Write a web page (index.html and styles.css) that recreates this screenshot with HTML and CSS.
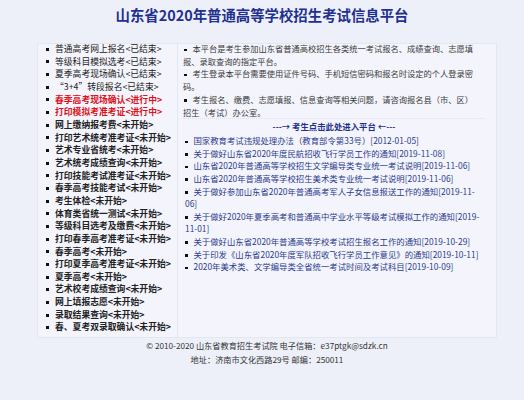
FILE: index.html
```html
<!DOCTYPE html>
<html lang="zh">
<head>
<meta charset="utf-8">
<title>山东省2020年普通高等学校招生考试信息平台</title>
<link rel="stylesheet" href="styles.css">
</head>
<body>
<h1 class="title">山东省2020年普通高等学校招生考试信息平台</h1>
<div class="main">
  <ul class="menu">
    <li>普通高考网上报名&lt;已结束&gt;</li>
    <li>等级科目模拟选考&lt;已结束&gt;</li>
    <li>夏季高考现场确认&lt;已结束&gt;</li>
    <li>“3+4”转段报名&lt;已结束&gt;</li>
    <li class="on">春季高考现场确认&lt;进行中&gt;</li>
    <li class="on">打印模拟考准考证&lt;进行中&gt;</li>
    <li class="b">网上缴纳报考费&lt;未开始&gt;</li>
    <li class="b">打印艺术统考准考证&lt;未开始&gt;</li>
    <li class="b">艺术专业省统考&lt;未开始&gt;</li>
    <li class="b">艺术统考成绩查询&lt;未开始&gt;</li>
    <li class="b">打印技能考试准考证&lt;未开始&gt;</li>
    <li class="b">春季高考技能考试&lt;未开始&gt;</li>
    <li class="b">考生体检&lt;未开始&gt;</li>
    <li class="b">体育类省统一测试&lt;未开始&gt;</li>
    <li class="b">等级科目选考及缴费&lt;未开始&gt;</li>
    <li class="b">打印春季高考准考证&lt;未开始&gt;</li>
    <li class="b">春季高考&lt;未开始&gt;</li>
    <li class="b">打印夏季高考准考证&lt;未开始&gt;</li>
    <li class="b">夏季高考&lt;未开始&gt;</li>
    <li class="b">艺术校考成绩查询&lt;未开始&gt;</li>
    <li class="b">网上填报志愿&lt;未开始&gt;</li>
    <li class="b">录取结果查询&lt;未开始&gt;</li>
    <li class="b">春、夏考双录取确认&lt;未开始&gt;</li>
  </ul>
  <div class="content">
    <div class="notes">
      <p><span class="dot"></span>本平台是考生参加山东省普通高校招生各类统一考试报名、成绩查询、志愿填报、录取查询的指定平台。</p>
      <p><span class="dot"></span>考生登录本平台需要使用证件号码、手机短信密码和报名时设定的个人登录密码。</p>
      <p><span class="dot"></span>考生报名、缴费、志愿填报、信息查询等相关问题，请咨询报名县（市、区）<span class="nw">招生（考试）办公室。</span></p>
    </div>
    <div class="enter">---→ 考生点击此处进入平台 ←---</div>
    <ul class="news">
      <li>国家教育考试违规处理办法（教育部令第33号）[2012-01-05]</li>
      <li>关于做好山东省2020年度民航招收飞行学员工作的通知[2019-11-08]</li>
      <li>山东省2020年普通高等学校招生文学编导类专业统一考试说明[2019-11-06]</li>
      <li>山东省2020年普通高等学校招生美术类专业统一考试说明[2019-11-06]</li>
      <li>关于做好参加山东省2020年普通高考军人子女信息报送工作的通知[2019-11-06]</li>
      <li>关于做好2020年夏季高考和普通高中学业水平等级考试模拟工作的通知[2019-11-01]</li>
      <li>关于做好山东省2020年普通高等学校考试招生报名工作的通知[2019-10-29]</li>
      <li>关于印发《山东省2020年度军队招收飞行学员工作意见》的通知[2019-10-11]</li>
      <li>2020年美术类、文学编导类全省统一考试时间及考试科目[2019-10-09]</li>
    </ul>
  </div>
</div>
<div class="footer">
  <p>© 2010-2020 山东省教育招生考试院 电子信箱：e37ptgk@sdzk.cn</p>
  <p>地址：济南市文化西路29号 邮编：250011</p>
</div>
</body>
</html>
```
FILE: styles.css
```css
html, body {
  margin: 0;
  padding: 0;
  background: #eef0f9;
  font-family: "Noto Sans CJK SC", "Noto Sans", sans-serif;
  color: #333;
}
.title {
  margin: 0;
  padding-top: 5px;
  height: 28px;
  line-height: 20px;
  text-align: center;
  font-size: 14.4px;
  font-weight: bold;
  color: #22318f;
}
.main {
  box-sizing: border-box;
  margin: 10px 27px 0 37px;
  display: flex;
  height: 295px;
  overflow: hidden;
  background: #f4f5fc;
  border: 1px solid #e4e6f0;
}
.menu {
  list-style: none;
  margin: -1px 0 0;
  padding: 0 0 0 8px;
  width: 131px;
  flex: none;
  border-right: 1px solid #e4e6f0;
  font-size: 8.8px;
  line-height: 12.65px;
  color: #222;
}
.menu li {
  display: flex;
  align-items: center;
  white-space: nowrap;
}
.menu li::before {
  content: "";
  width: 3px;
  height: 3px;
  background: #111;
  margin-right: 6px;
  flex: none;
}
.menu li.on {
  color: #d9121b;
  font-weight: bold;
}
.menu li.b {
  font-weight: bold;
}
.content {
  flex: 1;
  padding: 0 11px 0 5px;
  font-size: 8.4px;
}
.notes {
  margin-top: -2px;
  font-size: 8.25px;
  line-height: 12.7px;
  color: #3a3a3a;
  padding-bottom: 0;
  border-bottom: 1px dotted #dde0ec;
}
.notes p {
  margin: 0;
}
.nw {
  white-space: nowrap;
}
.dot {
  display: inline-block;
  width: 2.5px;
  height: 2.5px;
  background: #111;
  vertical-align: middle;
  margin: 0 6px 0 1px;
}
.enter {
  text-align: center;
  font-weight: bold;
  color: #1f2f8a;
  line-height: 14px;
  margin: 0 0 1px;
}
.news {
  list-style: none;
  margin: 0;
  padding: 0 0 0 2px;
  line-height: 12.6px;
  color: #2b3a8c;
}
.news li::before {
  content: "";
  display: inline-block;
  width: 2.5px;
  height: 2.5px;
  background: #111;
  vertical-align: middle;
  margin-right: 6px;
}
.footer {
  text-align: center;
  font-size: 8.2px;
  line-height: 14px;
  color: #333;
  padding: 0 0 0 10px;
}
.footer p {
  margin: 0;
}
```
